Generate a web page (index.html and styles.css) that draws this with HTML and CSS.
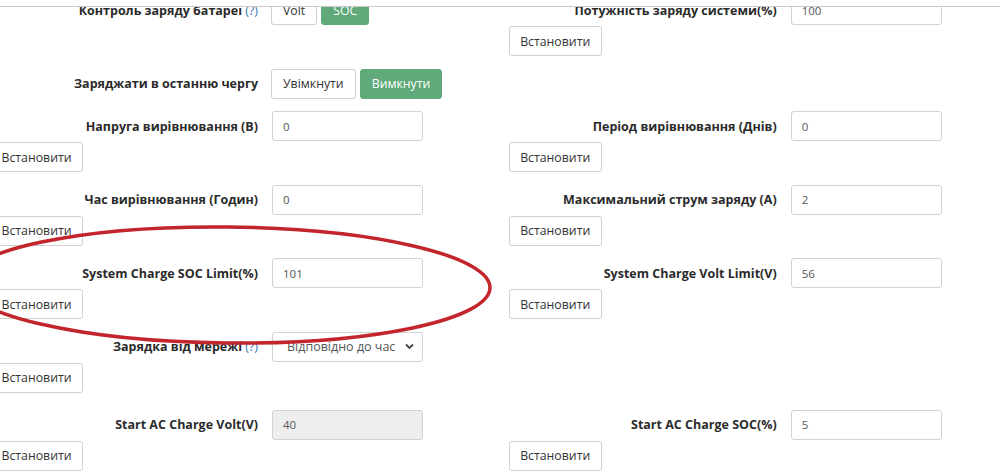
FILE: index.html
```html
<!DOCTYPE html>
<html lang="uk">
<head>
<meta charset="utf-8">
<title>Налаштування заряду</title>
<link rel="stylesheet" href="styles.css">
</head>
<body>
<div class="topbar"></div>
<div class="page">
  <div class="row row-a">
    <div class="field">
      <div class="line">
        <label class="lbl">Контроль заряду батареї <a class="help">(?)</a></label>
        <div class="toggle">
          <button class="tbtn">Volt</button>
          <button class="tbtn active">SOC</button>
        </div>
      </div>
    </div>
    <div class="field">
      <div class="line">
        <label class="lbl">Потужність заряду системи(%)</label>
        <input class="inp" value="100">
      </div>
      <button class="setbtn">Встановити</button>
    </div>
  </div>
  <div class="row row-b">
    <div class="field">
      <div class="line">
        <label class="lbl">Заряджати в останню чергу</label>
        <div class="toggle">
          <button class="tbtn">Увімкнути</button>
          <button class="tbtn active">Вимкнути</button>
        </div>
      </div>
    </div>
    <div class="field"></div>
  </div>
  <div class="row">
    <div class="field">
      <div class="line">
        <label class="lbl">Напруга вирівнювання (В)</label>
        <input class="inp" value="0">
      </div>
      <button class="setbtn">Встановити</button>
    </div>
    <div class="field">
      <div class="line">
        <label class="lbl">Період вирівнювання (Днів)</label>
        <input class="inp" value="0">
      </div>
      <button class="setbtn">Встановити</button>
    </div>
  </div>
  <div class="row">
    <div class="field">
      <div class="line">
        <label class="lbl">Час вирівнювання (Годин)</label>
        <input class="inp" value="0">
      </div>
      <button class="setbtn">Встановити</button>
    </div>
    <div class="field">
      <div class="line">
        <label class="lbl">Максимальний струм заряду (А)</label>
        <input class="inp" value="2">
      </div>
      <button class="setbtn">Встановити</button>
    </div>
  </div>
  <div class="row">
    <div class="field">
      <div class="line">
        <label class="lbl">System Charge SOC Limit(%)</label>
        <input class="inp" value="101">
      </div>
      <button class="setbtn">Встановити</button>
    </div>
    <div class="field">
      <div class="line">
        <label class="lbl">System Charge Volt Limit(V)</label>
        <input class="inp" value="56">
      </div>
      <button class="setbtn">Встановити</button>
    </div>
  </div>
  <div class="row row-f">
    <div class="field">
      <div class="line">
        <label class="lbl">Зарядка від мережі <a class="help">(?)</a></label>
        <div class="sel">
          <span class="sel-text">Відповідно до час</span>
          <svg class="chev" width="9" height="7" viewBox="0 0 9 7"><path d="M1 1.5 L4.5 5 L8 1.5" fill="none" stroke="#444" stroke-width="1.8"/></svg>
        </div>
      </div>
      <button class="setbtn">Встановити</button>
    </div>
    <div class="field"></div>
  </div>
  <div class="row">
    <div class="field">
      <div class="line">
        <label class="lbl">Start AC Charge Volt(V)</label>
        <input class="inp" value="40" disabled>
      </div>
      <button class="setbtn">Встановити</button>
    </div>
    <div class="field">
      <div class="line">
        <label class="lbl">Start AC Charge SOC(%)</label>
        <input class="inp" value="5">
      </div>
      <button class="setbtn">Встановити</button>
    </div>
  </div>
</div>
<svg class="annot" width="1000" height="471" viewBox="0 0 1000 471">
  <ellipse cx="227" cy="285" rx="263" ry="58" fill="none" stroke="#c3252c" stroke-width="3.5" transform="rotate(0.6 227 285)"/>
</svg>
</body>
</html>
```
FILE: styles.css
```css
html, body {
  margin: 0;
  padding: 0;
  background: #fff;
  overflow: hidden;
}
body {
  width: 1000px;
  height: 471px;
  position: relative;
  font-family: "Open Sans", "Liberation Sans", sans-serif;
  color: #333;
}
.topbar {
  position: fixed;
  top: 0;
  left: 0;
  width: 1000px;
  height: 6px;
  background: #fff;
  border-bottom: 1px solid #c9c9c9;
  z-index: 5;
}
.page {
  margin-left: -10px;
  margin-top: -5px;
}
.row {
  display: grid;
  grid-template-columns: 518.7px 518.7px;
  margin-bottom: 12.6px;
}
.row-f {
  margin-bottom: 16.6px;
}
.field {
  display: flex;
  flex-direction: column;
  align-items: flex-start;
}
.line {
  display: flex;
  align-items: center;
  height: 30px;
}
.lbl {
  width: 268px;
  text-align: right;
  font-size: 12.5px;
  font-weight: 700;
  color: #2b2b2b;
  white-space: nowrap;
}
.help {
  color: #337ab7;
  font-weight: 400;
}
.inp {
  box-sizing: border-box;
  margin: 0 0 0 14px;
  width: 151px;
  height: 30px;
  border: 1px solid #d2d2d2;
  border-radius: 3px;
  padding: 0 10px;
  font-family: "Open Sans", "Liberation Sans", sans-serif;
  font-size: 11.5px;
  color: #555;
  background: #fff;
  outline: none;
}
.inp:disabled {
  background: #eeeeee;
  color: #555;
}
.toggle {
  display: flex;
  gap: 4px;
  margin-left: 13px;
}
.tbtn {
  box-sizing: border-box;
  height: 30px;
  padding: 0 11px;
  border: 1px solid #d0d0d0;
  border-radius: 3px;
  background: #fff;
  font-family: "Open Sans", "Liberation Sans", sans-serif;
  font-size: 12.3px;
  color: #333;
}
.tbtn.active {
  background: #5fa97a;
  border-color: #5fa97a;
  color: #fff;
}
.sel {
  box-sizing: border-box;
  margin-left: 14px;
  width: 151px;
  height: 30px;
  border: 1px solid #d2d2d2;
  border-radius: 3px;
  display: flex;
  align-items: center;
  padding: 0 8px 0 14px;
  background: #fff;
}
.sel-text {
  flex: 1;
  white-space: nowrap;
  font-size: 12.5px;
  color: #555;
}
.chev {
  flex: none;
  margin-left: 4px;
}
.setbtn {
  box-sizing: border-box;
  margin-top: 1px;
  width: 93px;
  height: 30px;
  border: 1px solid #d0d0d0;
  border-radius: 3px;
  background: #fff;
  font-family: "Open Sans", "Liberation Sans", sans-serif;
  font-size: 12.3px;
  color: #333;
  padding: 0;
}
.annot {
  position: absolute;
  left: 0;
  top: 0;
  pointer-events: none;
  z-index: 3;
}
```
